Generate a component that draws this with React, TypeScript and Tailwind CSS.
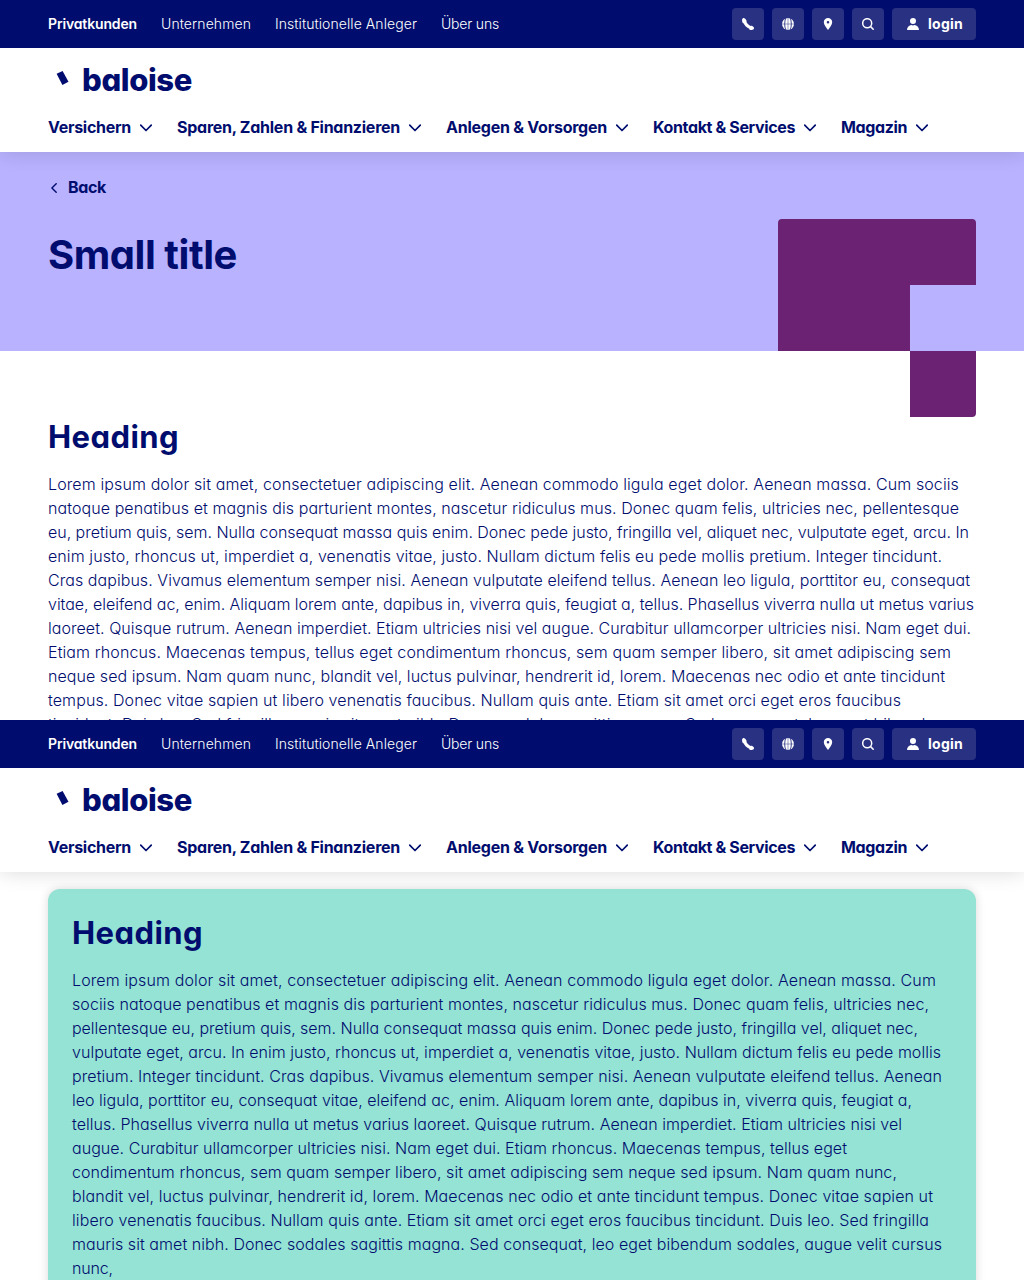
import { useLayoutEffect, useRef, type ReactNode } from "react";

const FONT = "[font-family:Inter,'Noto_Sans',sans-serif] [font-feature-settings:'cv11','calt'_0]";

/* One line of text whose tracking is set so that it fills the given width. */
function Fit({ width, className = "", children }: { width: number; className?: string; children: string }) {
  const ref = useRef<HTMLSpanElement>(null);
  useLayoutEffect(() => {
    const el = ref.current;
    if (!el) return;
    const fit = () => {
      el.style.letterSpacing = "0px";
      const natural = el.getBoundingClientRect().width;
      el.style.letterSpacing = `${(width - natural) / children.length}px`;
    };
    fit();
    document.fonts.ready.then(fit);
  }, [width, children]);
  return (
    <span ref={ref} className={`block w-max whitespace-pre ${className}`}>
      {children}
    </span>
  );
}

type Line = [string, number];

const introLines: Line[] = [
  ["Lorem ipsum dolor sit amet, consectetuer adipiscing elit. Aenean commodo ligula eget dolor. Aenean massa. Cum sociis", 911],
  ["natoque penatibus et magnis dis parturient montes, nascetur ridiculus mus. Donec quam felis, ultricies nec, pellentesque", 911],
  ["eu, pretium quis, sem. Nulla consequat massa quis enim. Donec pede justo, fringilla vel, aliquet nec, vulputate eget, arcu. In", 921],
  ["enim justo, rhoncus ut, imperdiet a, venenatis vitae, justo. Nullam dictum felis eu pede mollis pretium. Integer tincidunt.", 894],
  ["Cras dapibus. Vivamus elementum semper nisi. Aenean vulputate eleifend tellus. Aenean leo ligula, porttitor eu, consequat", 922],
  ["vitae, eleifend ac, enim. Aliquam lorem ante, dapibus in, viverra quis, feugiat a, tellus. Phasellus viverra nulla ut metus varius", 926],
  ["laoreet. Quisque rutrum. Aenean imperdiet. Etiam ultricies nisi vel augue. Curabitur ullamcorper ultricies nisi. Nam eget dui.", 923],
  ["Etiam rhoncus. Maecenas tempus, tellus eget condimentum rhoncus, sem quam semper libero, sit amet adipiscing sem", 903],
  ["neque sed ipsum. Nam quam nunc, blandit vel, luctus pulvinar, hendrerit id, lorem. Maecenas nec odio et ante tincidunt", 897],
  ["tempus. Donec vitae sapien ut libero venenatis faucibus. Nullam quis ante. Etiam sit amet orci eget eros faucibus", 853],
  ["tincidunt. Duis leo. Sed fringilla mauris sit amet nibh. Donec sodales sagittis magna. Sed consequat, leo eget bibendum", 901],
];

const cardLines: Line[] = [
  ["Lorem ipsum dolor sit amet, consectetuer adipiscing elit. Aenean commodo ligula eget dolor. Aenean massa. Cum", 864],
  ["sociis natoque penatibus et magnis dis parturient montes, nascetur ridiculus mus. Donec quam felis, ultricies nec,", 857],
  ["pellentesque eu, pretium quis, sem. Nulla consequat massa quis enim. Donec pede justo, fringilla vel, aliquet nec,", 846],
  ["vulputate eget, arcu. In enim justo, rhoncus ut, imperdiet a, venenatis vitae, justo. Nullam dictum felis eu pede mollis", 869],
  ["pretium. Integer tincidunt. Cras dapibus. Vivamus elementum semper nisi. Aenean vulputate eleifend tellus. Aenean", 870],
  ["leo ligula, porttitor eu, consequat vitae, eleifend ac, enim. Aliquam lorem ante, dapibus in, viverra quis, feugiat a,", 840],
  ["tellus. Phasellus viverra nulla ut metus varius laoreet. Quisque rutrum. Aenean imperdiet. Etiam ultricies nisi vel", 830],
  ["augue. Curabitur ullamcorper ultricies nisi. Nam eget dui. Etiam rhoncus. Maecenas tempus, tellus eget", 775],
  ["condimentum rhoncus, sem quam semper libero, sit amet adipiscing sem neque sed ipsum. Nam quam nunc,", 825],
  ["blandit vel, luctus pulvinar, hendrerit id, lorem. Maecenas nec odio et ante tincidunt tempus. Donec vitae sapien ut", 861],
  ["libero venenatis faucibus. Nullam quis ante. Etiam sit amet orci eget eros faucibus tincidunt. Duis leo. Sed fringilla", 857],
  ["mauris sit amet nibh. Donec sodales sagittis magna. Sed consequat, leo eget bibendum sodales, augue velit cursus", 870],
  ["nunc,", 41],
];

const metaLinks: Line[] = [
  ["Privatkunden", 89],
  ["Unternehmen", 90],
  ["Institutionelle Anleger", 142],
  ["Über uns", 58],
];

const navItems: Line[] = [
  ["Versichern", 83],
  ["Sparen, Zahlen & Finanzieren", 223],
  ["Anlegen & Vorsorgen", 161],
  ["Kontakt & Services", 142],
  ["Magazin", 66],
];

function Paragraph({ lines }: { lines: Line[] }) {
  return (
    <div className="text-base leading-6 font-[360]">
      {lines.map(([text, width]) => (
        <Fit key={text} width={width}>{text}</Fit>
      ))}
    </div>
  );
}

const PhoneIcon = () => (
  <svg width="12" height="12" viewBox="0 0 12 12">
    <path d="M1.900 2.200C2.600 5.600 6 9.300 10 10.100" fill="none" stroke="currentColor" strokeWidth="3.300" />
    <path d="M.1 1.600C.2.500 1.400-.2 2.400.2c.9.400 1.800 1.700 2.100 2.600.2.800-.2 1.300-.8 1.700L.8 5C.2 3.900 0 2.600.1 1.600ZM7.700 8.200c.5-.5 1.200-.7 1.900-.4.800.3 1.900 1 2.300 1.700.4.900-.1 2-1.100 2.300-1.200.3-2.500.1-3.500-.4Z" fill="currentColor" />
  </svg>
);

const GlobeIcon = () => (
  <svg width="12" height="12" viewBox="0 0 12 12">
    <circle cx="6" cy="6" r="6" fill="currentColor" />
    <g fill="none" stroke="#293182">
      <path d="M0 6h12M6 0v12" strokeWidth=".5" />
      <path d="M3.800 0C2.300 3.500 2.300 8.500 3.800 12M8.200 0c1.500 3.500 1.500 8.500 0 12" strokeWidth=".9" />
    </g>
  </svg>
);

const PinIcon = () => (
  <svg width="12" height="12" viewBox="0 0 12 12" fill="currentColor">
    <path fillRule="evenodd" d="M6 0a4.200 4.200 0 0 0-4.200 4.200C1.800 7 4.500 9.800 6 12c1.500-2.200 4.200-5 4.200-7.800A4.200 4.200 0 0 0 6 0Zm0 3a1.300 1.300 0 1 1 0 2.600 1.300 1.300 0 0 1 0-2.600Z" />
  </svg>
);

const SearchIcon = () => (
  <svg width="12" height="12" viewBox="0 0 12 12" fill="none" stroke="currentColor" strokeWidth="1.500" strokeLinecap="round">
    <circle cx="5.200" cy="5.200" r="4.500" />
    <path d="m8.600 8.600 2.600 2.600" />
  </svg>
);

const UserIcon = () => (
  <svg width="12" height="12" viewBox="0 0 12 12" fill="currentColor">
    <circle cx="6" cy="3" r="3" />
    <path d="M0 12C0 9.200 2.200 7.500 4.400 7.100c.5.300 1 .4 1.600.4s1.100-.1 1.600-.4C9.800 7.500 12 9.200 12 12Z" />
  </svg>
);

function IconButton({ children }: { children: ReactNode }) {
  return <button className="flex size-8 items-center justify-center rounded bg-[#293182]">{children}</button>;
}

function Header() {
  return (
    <header className="relative z-10 shrink-0 bg-white shadow-[0_0_20px_rgba(0,0,0,0.15)]">
      <div className="flex h-12 items-center justify-between bg-[#000d6e] px-12 text-white">
        <nav className="flex gap-6 text-sm">
          {metaLinks.map(([text, width], i) => (
            <a key={text} className={i === 0 ? "font-semibold" : "font-[350]"}>
              <Fit width={width}>{text}</Fit>
            </a>
          ))}
        </nav>
        <div className="flex gap-2">
          <IconButton><PhoneIcon /></IconButton>
          <IconButton><GlobeIcon /></IconButton>
          <IconButton><PinIcon /></IconButton>
          <IconButton><SearchIcon /></IconButton>
          <button className="flex h-8 w-[84px] items-center gap-[9px] rounded bg-[#293182] pl-[15px] text-sm font-bold">
            <UserIcon />
            <Fit width={35}>login</Fit>
          </button>
        </div>
      </div>
      <div className="flex h-[104px] flex-col px-12">
        <div className="flex h-[60px] items-center pl-2">
          <svg className="mr-[12px]" width="14" height="16" viewBox="0 0 14 16">
            <path d="M.6 3.800 6.600.9 12.500 11.800 6.400 15Z" fill="#000d6e" />
          </svg>
          <Fit width={110} className="pt-[3px] text-[31px] leading-9 font-extrabold">baloise</Fit>
        </div>
        <nav className="flex h-[38px] items-center gap-6 text-base font-bold">
          {navItems.map(([text, width]) => (
            <a key={text} className="flex items-center gap-[9px]">
              <Fit width={width}>{text}</Fit>
              <svg className="mt-0.5 mr-px" width="12" height="8" viewBox="0 0 12 8" fill="none" stroke="currentColor" strokeWidth="1.700" strokeLinecap="round" strokeLinejoin="round">
                <path d="m.7 1.200 5.300 5.300 5.300-5.300" />
              </svg>
            </a>
          ))}
        </nav>
      </div>
    </header>
  );
}

export default function App() {
  return (
    <div className={`h-[1280px] w-[1024px] overflow-hidden bg-white text-[#000d6e] ${FONT}`}>
      <section className="h-[720px] overflow-hidden">
        <Header />
        <div className="flex h-[199px] justify-between bg-[#b8b2ff] px-12">
          <div className="pt-[23px]">
            <a className="flex items-center gap-[11px] text-base font-bold">
              <svg className="mt-0.5 ml-[3px]" width="6" height="10" viewBox="0 0 6 10" fill="none" stroke="currentColor" strokeWidth="1.400" strokeLinecap="round" strokeLinejoin="round">
                <path d="M5.200.7.9 5l4.300 4.300" />
              </svg>
              <Fit width={38}>Back</Fit>
            </a>
            <h1 className="mt-7 text-[40px] leading-[56px] font-bold">
              <Fit width={189}>Small title</Fit>
            </h1>
          </div>
          <svg className="relative mt-[67px]" width="198" height="198" viewBox="0 0 198 198" fill="#6b2273">
            <path d="M4 0H194A4 4 0 0 1 198 4V66H132V132H0V4A4 4 0 0 1 4 0Z" />
            <path d="M132 132H198V194A4 4 0 0 1 194 198H132Z" />
          </svg>
        </div>
        <div className="px-12 pt-[66px]">
          <h2 className="mb-[15px] text-[31px] leading-10 font-bold">
            <Fit width={131}>Heading</Fit>
          </h2>
          <Paragraph lines={introLines} />
        </div>
      </section>
      <section className="h-[560px] overflow-hidden">
        <Header />
        <div className="mx-12 mt-[17px] h-[420px] rounded-xl bg-[#94e3d4] px-6 pt-6 shadow-[0_0_10px_rgba(0,0,0,0.15)]">
          <h2 className="mb-[15px] text-[31px] leading-10 font-bold">
            <Fit width={131}>Heading</Fit>
          </h2>
          <Paragraph lines={cardLines} />
        </div>
      </section>
    </div>
  );
}
